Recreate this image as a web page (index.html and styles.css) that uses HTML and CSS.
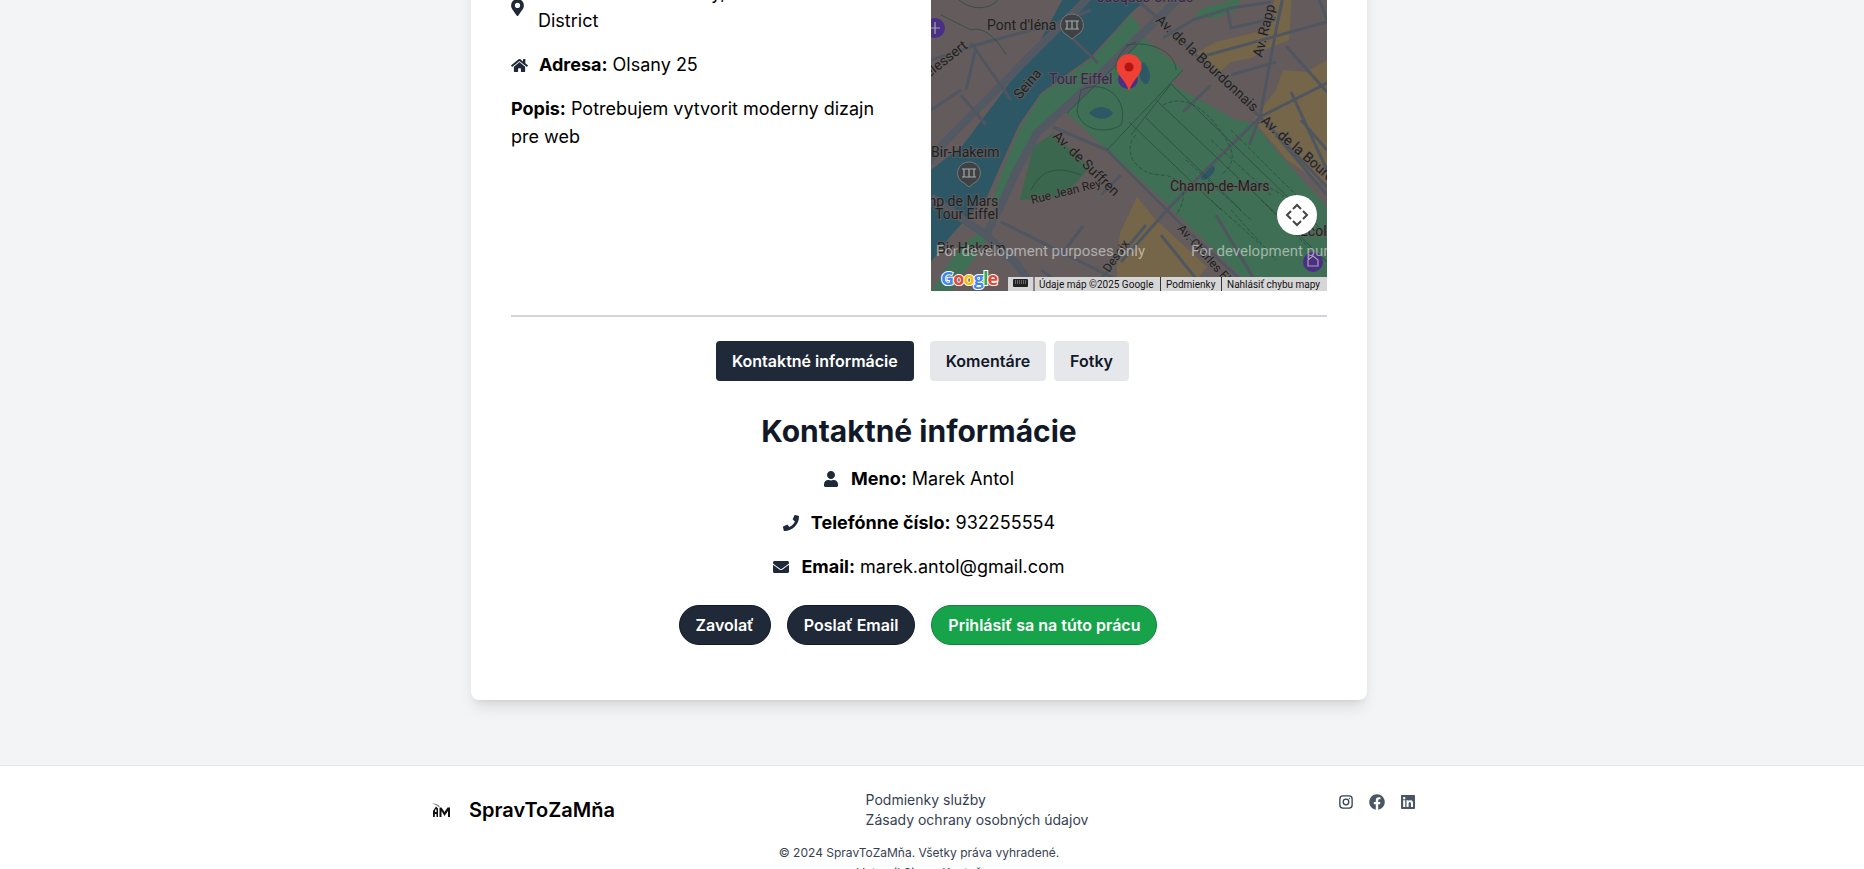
FILE: index.html
```html
<!DOCTYPE html>
<html lang="sk">
<head>
<meta charset="UTF-8">
<meta name="viewport" content="width=device-width, initial-scale=1.0">
<title>SpravToZaMňa</title>
<link rel="stylesheet" href="styles.css">
</head>
<body>
  <main class="page">
    <div class="card">
      <div class="top">
        <div class="info">
          <p class="row row-loc">
            <svg class="ico ico-pin" viewBox="0 0 384 512"><path d="M172.268 501.67C26.97 291.031 0 269.413 0 192 0 85.961 85.961 0 192 0s192 85.961 192 192c0 77.413-26.97 99.031-172.268 309.67-9.535 13.774-29.93 13.773-39.464 0zM192 272c44.183 0 80-35.817 80-80s-35.817-80-80-80-80 35.817-80 80 35.817 80 80 80z"/></svg>
            <span><b>Lokalita:</b> Trenčiansky, Bánovce nad Nitrou District</span>
          </p>
          <p class="row">
            <svg class="ico ico-home" viewBox="0 0 576 512"><path d="M280.37 148.26L96 300.11V464a16 16 0 0 0 16 16l112.06-.29a16 16 0 0 0 15.92-16V368a16 16 0 0 1 16-16h64a16 16 0 0 1 16 16v95.64a16 16 0 0 0 16 16.05L464 480a16 16 0 0 0 16-16V300L295.67 148.26a12.19 12.19 0 0 0-15.3 0zM571.6 251.47L488 182.56V44.05a12 12 0 0 0-12-12h-56a12 12 0 0 0-12 12v72.61L318.47 43a48 48 0 0 0-61 0L4.34 251.47a12 12 0 0 0-1.6 16.9l25.5 31A12 12 0 0 0 45.15 301l235.22-193.74a12.19 12.19 0 0 1 15.3 0L530.9 301a12 12 0 0 0 16.9-1.6l25.5-31a12 12 0 0 0-1.7-16.93z"/></svg>
            <span><b>Adresa:</b> Olsany 25</span>
          </p>
          <p class="desc"><b>Popis:</b> Potrebujem vytvorit moderny dizajn pre web</p>
        </div>

        <svg class="map" viewBox="0 -22 396 313">
          <rect class="land" x="0" y="-22" width="396" height="313"/>

          <!-- tan blocks -->
          <path class="tan" d="M262 55L285 42L335 30L342 5L350 -22L362 -22L358 40L338 48L320 58L300 62L285 75Z"/>
          <path class="tan" d="M322 120L345 90L352 70L375 72L396 60V187L356 160Z"/>
          <path class="tan" d="M189 233L206 197L222 217L276 267L256 291H186L186 257Z"/>

          <!-- water and green -->
          <path class="water" d="M143 -22H240L200 13L160 57L110 93L88 125L69 167L56 197L22 233L0 262V170L32 145L107 45Z"/>
          <path class="park" d="M206 33L252 70L240 84L305 120L322 123L356 163L396 207V277L350 291H325L229 197L176 150L136 113Z"/>
          <path class="park-dark" d="M122 133L159 167L132 197L89 200L102 147Z"/>
          <path class="park" d="M200 15L160 60L110 95L88 130L70 175L60 205L72 205L98 140L146 93L210 28Z"/>
          <path class="park" d="M256 24L272 8L310 -2L305 10L285 18L270 18Z"/>
          <path class="park" d="M0 291L30 245L50 232L56 240L20 291Z"/>
          <path class="water" d="M158 113C165 105 176 105 182 113C178 120 165 121 158 113Z"/>
          <path class="water" d="M212 62C218 66 222 78 216 84C208 84 206 70 212 62Z"/>
          <ellipse class="water" cx="277" cy="173" rx="9" ry="4" transform="rotate(-45 277 173)"/>
          <ellipse class="water" cx="50" cy="-8" rx="9" ry="3" transform="rotate(-30 50 -8)"/>

          <!-- wide roads -->
          <g class="road-wide">
            <path d="M-5 165L13 143L105 50L150 5L175 -22"/>
            <path d="M55 235L70 205L86 170L106 133L146 97L236 10L268 -22"/>
            <path d="M0 197L55 235L85 263L105 291"/>
          </g>
          <g class="road">
            <path d="M140 37L167 63"/>
            <path d="M200 -5L226 17L329 117L396 187"/>
            <path d="M176 150L258 232L322 291"/>
            <path d="M122 127L176 150"/>
            <path d="M356 -22L345 30L329 117L318 145"/>
            <path d="M396 83L329 117L270 175L236 210L190 262"/>
            <path d="M232 38L262 20L300 8L340 2"/>
            <path d="M296 8L300 28L345 18"/>
            <path d="M266 58L396 22"/>
            <path d="M300 75L345 62"/>
            <path d="M280 85L252 112"/>
            <path d="M380 -22L396 20"/>
            <path d="M355 46L396 92"/>
            <path d="M360 92L396 170"/>
            <path d="M70 222L150 262L190 282"/>
            <path d="M40 43L80 100"/>
            <path d="M0 60L45 45L130 22L160 10"/>
            <path d="M45 48L35 90"/>
            <path d="M0 110L30 90"/>
            <path d="M190 175L170 195"/>
            <path d="M152 226L130 255"/>
            <path d="M285 215L330 291"/>
            <path d="M370 120L396 150"/>
            <path d="M345 135L396 195"/>
            <path d="M215 225L160 291"/>
            <path d="M30 95L55 125"/>
            <path d="M110 270L140 291"/>
            <path d="M230 235L275 291"/>
          </g>

          <!-- park paths -->
          <g class="path">
            <path d="M136 113L206 45M176 150L252 70M200 135L240 84"/>
            <path d="M198 122L290 210M215 118L310 210M225 100L396 262M240 84L396 235"/>
            <path d="M150 90C175 78 198 100 190 125C175 135 148 130 146 110Z"/>
            <path d="M195 45C225 40 245 55 245 70M185 70C185 55 195 45 205 42"/>
            <path d="M20 -10C30 10 60 15 70 -5M10 15L40 30C55 25 70 45 75 55"/>
            <path d="M100 190C110 170 125 165 150 175"/>
          </g>
          <g class="path path-dash">
            <path d="M232 105C250 95 270 105 285 125C300 145 310 160 290 175"/>
            <path d="M205 135C190 150 205 175 230 175C250 175 260 195 245 215"/>
            <path d="M300 130L370 200M280 140L340 195M255 160L320 220"/>
            <path d="M300 210L345 260M330 200L380 250M280 200L330 245M250 230L300 280"/>
            <path d="M310 190C330 180 350 190 360 205"/>
          </g>

          <!-- labels -->
          <text class="lbl lbl-poi" x="166" y="2">Jacques Chirac</text>
          <text class="lbl" x="56" y="30">Pont d'Iéna</text>
          <text class="lbl lbl-poi" x="118" y="84">Tour Eiffel</text>
          <text class="lbl" x="0" y="157">Bir-Hakeim</text>
          <text class="lbl" x="-7" y="206">mp de Mars</text>
          <text class="lbl" x="4" y="219">Tour Eiffel</text>
          <text class="lbl" x="239" y="191">Champ-de-Mars</text>
          <text class="lbl" x="369" y="236">Ecole</text>
          <text class="lbl" x="6" y="253">Bir-Hakeim</text>
          <text class="lbl lbl-sm" transform="translate(101 204) rotate(-14)">Rue Jean Rey</text>
          <text class="lbl" transform="translate(-2 78) rotate(-38)">elessert</text>
          <text class="lbl" transform="translate(89 100) rotate(-50)">Seina</text>
          <text class="lbl" transform="translate(224 21) rotate(43)">Av. de la Bourdonnais</text>
          <text class="lbl" transform="translate(121 137) rotate(44)">Av. de Suffren</text>
          <text class="lbl" transform="translate(331 58) rotate(-76)">Av. Rapp</text>
          <text class="lbl" transform="translate(329 122) rotate(41)">Av. de la Bourdonnais</text>
          <text class="lbl lbl-sm" transform="translate(246 229) rotate(48)">Av. Charles Floquet</text>
          <text class="lbl lbl-sm" transform="translate(178 273) rotate(-55)">Desaix</text>

          <!-- markers -->
          <path class="poi" d="M141 14a11 11 0 0 1 5 21l-5 4-5-4a11 11 0 0 1 5-21z"/>
          <path class="poi" d="M38 162a11 11 0 0 1 5 21l-5 4-5-4a11 11 0 0 1 5-21z"/>
          <path class="poi-mark" d="M134 21h14M134 29h14M136 21v8M141 21v8M146 21v8M31 169h14M31 177h14M33 169v8M38 169v8M43 169v8"/>
          <circle class="poi-purple" cx="4" cy="28" r="10"/>
          <circle class="poi-purple" cx="382" cy="262" r="10"/>
          <circle class="poi-purple" cx="197" cy="79" r="10"/>
          <path class="poi-mark" d="M4 22v12M-1 28h10M377 266v-6l5-4 5 4v6z"/>

          <!-- red pin -->
          <path class="pin" d="M198 54c7 0 12.500 5.500 12.500 12.500c0 9-9 13-12.500 24.500c-3.500-11.500-12.500-15.500-12.500-24.500C185.500 59.500 191 54 198 54z"/>
          <circle class="pin-dot" cx="198" cy="67" r="4.500"/>

          <!-- watermark -->
          <text class="dev" x="5" y="256">For development purposes only</text>
          <text class="dev" x="260" y="256">For development purposes only</text>

          <!-- fullscreen control -->
          <circle class="fs" cx="366" cy="215" r="20"/>
          <path class="fs-arrow" d="M362 209l4-4 4 4M362 221l4 4 4-4M360 211l-4 4 4 4M372 211l4 4-4 4"/>

          <!-- google logo -->
          <text class="goog" x="10" y="285"><tspan fill="#4285f4">G</tspan><tspan fill="#ea4335">o</tspan><tspan fill="#fbbc05">o</tspan><tspan fill="#4285f4">g</tspan><tspan fill="#34a853">l</tspan><tspan fill="#ea4335">e</tspan></text>

          <!-- attribution -->
          <rect class="attr-bg" x="77" y="277" width="319" height="14"/>
          <rect class="attr-key" x="82" y="279" width="15" height="8" rx="1"/>
          <path class="attr-key-l" d="M84 281h11M84 283h11"/>
          <path class="attr-sep" d="M103 277v14M229.500 277v14M290.500 277v14"/>
          <text class="attr" x="108" y="287.500">Údaje máp ©2025 Google</text>
          <text class="attr" x="235" y="287.500">Podmienky</text>
          <text class="attr" x="296" y="287.500">Nahlásiť chybu mapy</text>
        </svg>
      </div>

      <hr class="sep">

      <div class="tabs">
        <button class="tab tab-active">Kontaktné informácie</button>
        <button class="tab">Komentáre</button>
        <button class="tab">Fotky</button>
      </div>

      <h2 class="title">Kontaktné informácie</h2>

      <p class="contact">
        <svg class="ico ico-user" viewBox="0 0 448 512"><path d="M224 256c70.7 0 128-57.3 128-128S294.700 0 224 0 96 57.300 96 128s57.300 128 128 128zm89.600 32h-16.700c-22.200 10.200-46.900 16-72.900 16s-50.600-5.800-72.900-16h-16.700C60.200 288 0 348.200 0 422.400V464c0 26.500 21.500 48 48 48h352c26.500 0 48-21.500 48-48v-41.600c0-74.200-60.200-134.400-134.400-134.400z"/></svg><b>Meno:</b> Marek Antol
      </p>
      <p class="contact">
        <svg class="ico ico-wide" viewBox="0 0 512 512"><path d="M493.400 24.600l-104-24c-11.300-2.600-22.900 3.300-27.500 13.900l-48 112c-4.200 9.800-1.400 21.300 6.900 28l60.600 49.600c-36 76.700-98.900 140.500-177.200 177.200l-49.600-60.600c-6.800-8.300-18.200-11.100-28-6.900l-112 48C3.900 366.500-2 378.100.6 389.400l24 104C27.100 504.200 36.700 512 48 512c256.100 0 464-207.500 464-464 0-11.200-7.700-20.900-18.600-23.400z"/></svg><b>Telefónne číslo:</b> 932255554
      </p>
      <p class="contact">
        <svg class="ico ico-wide" viewBox="0 0 512 512"><path d="M502.300 190.800c3.900-3.100 9.700-.2 9.700 4.700V400c0 26.500-21.500 48-48 48H48c-26.500 0-48-21.500-48-48V195.600c0-5 5.700-7.800 9.700-4.700 22.400 17.400 52.100 39.500 154.100 113.600 21.100 15.400 56.700 47.800 92.200 47.600 35.700.3 72-32.800 92.300-47.600 102-74.100 131.600-96.300 154-113.700zM256 320c23.200.4 56.600-29.200 73.400-41.400 132.700-96.300 142.800-104.700 173.400-128.700 5.800-4.500 9.200-11.500 9.200-18.900v-19c0-26.500-21.500-48-48-48H48C21.500 64 0 85.500 0 112v19c0 7.400 3.400 14.300 9.200 18.900 30.600 23.900 40.700 32.400 173.400 128.700 16.800 12.200 50.200 41.800 73.400 41.400z"/></svg><b>Email:</b> marek.antol@gmail.com
      </p>

      <div class="actions">
        <button class="btn">Zavolať</button>
        <button class="btn">Poslať Email</button>
        <button class="btn btn-green">Prihlásiť sa na túto prácu</button>
      </div>
    </div>
  </main>

  <footer class="footer">
    <div class="foot-top">
      <div class="brand">
        <svg class="logo" viewBox="0 0 18 15">
          <path d="M0 .5C3 0 6 1 8 3.500L6.500 4C5 2.500 3 1.200 0 .5z" fill="#888"/>
          <path d="M1 14V8L4 3.500L6 5.500V14H4.500V11H2.800V14zM2.800 9H4.500V6.500L3.600 6z" fill="#111"/>
          <path d="M7.500 14V4.500H9.500L12.500 9L15.500 4.500H18V14H16V8L12.500 13L9.500 8V14z" fill="#111"/>
        </svg>
        <span class="brand-name">SpravToZaMňa</span>
      </div>
      <div class="links">
        <a>Podmienky služby</a>
        <a>Zásady ochrany osobných údajov</a>
      </div>
      <div class="social">
        <svg class="soc soc-ig" viewBox="0 0 16 16"><rect class="ig" x="1" y="1" width="14" height="14" rx="3.500"/><circle class="ig" cx="8" cy="8" r="3.200"/><circle cx="12" cy="4" r=".8"/></svg>
        <svg class="soc soc-fb" viewBox="0 0 512 512"><path d="M504 256C504 119 393 8 256 8S8 119 8 256c0 123.780 90.690 226.380 209.250 245V327.690h-63V256h63v-54.640c0-62.150 37-96.480 93.670-96.480 27.140 0 55.520 4.840 55.520 4.840v61h-31.280c-30.800 0-40.410 19.120-40.410 38.730V256h68.780l-11 71.690h-57.780V501C413.310 482.380 504 379.780 504 256z"/></svg>
        <svg class="soc soc-in" viewBox="0 0 448 512"><path d="M416 32H31.900C14.300 32 0 46.500 0 64.300v383.400C0 465.500 14.300 480 31.900 480H416c17.600 0 32-14.500 32-32.300V64.300c0-17.800-14.400-32.300-32-32.300zM135.400 416H69V202.200h66.500V416zm-33.200-243c-21.300 0-38.500-17.300-38.500-38.500S80.900 96 102.200 96c21.200 0 38.500 17.300 38.500 38.500 0 21.300-17.200 38.500-38.500 38.500zm282.100 243h-66.400V312c0-24.800-.5-56.700-34.500-56.700-34.600 0-39.900 27-39.900 54.900V416h-66.400V202.200h63.700v29.200h.9c8.900-16.800 30.600-34.500 62.900-34.500 67.200 0 79.700 44.300 79.700 101.900V416z"/></svg>
      </div>
    </div>
    <div class="copy">
      <p>© 2024 SpravToZaMňa. Všetky práva vyhradené.</p>
      <p>Vytvoril Simon Kontoš</p>
    </div>
  </footer>
</body>
</html>
```
FILE: styles.css
```css
html, body {
  height: 100%;
  overflow: hidden;
}

body {
  margin: 0;
  background: #f3f4f6;
  color: #000;
  font-family: Inter, "Liberation Sans", sans-serif;
}

p {
  margin: 0;
}

b {
  font-weight: 700;
}

.page {
  padding: 0 26px 65px 0;
}

.card {
  width: 896px;
  box-sizing: border-box;
  margin: -62px auto 0;
  padding: 40px 40px 55px;
  background: #fff;
  border-radius: 8px;
  box-shadow: 0 10px 15px -3px rgba(0, 0, 0, 0.1), 0 4px 6px -4px rgba(0, 0, 0, 0.1);
}

.top {
  display: grid;
  grid-template-columns: 396px 396px;
  gap: 24px;
}

.info {
  padding: 1px 6px 0 0;
  font-size: 18px;
  line-height: 28px;
}

.row {
  display: flex;
  align-items: center;
  margin-bottom: 16px;
}

.ico {
  fill: #1f2937;
  flex: none;
}

.ico-pin {
  width: 13px;
  height: 17px;
  margin: 0 14px 0 0;
}

.ico-home {
  width: 17px;
  height: 15px;
  margin: 0 11px 0 0;
}

.ico-user {
  width: 14px;
  height: 16px;
  margin-right: 13px;
  vertical-align: -2px;
}

.ico-wide {
  width: 16px;
  height: 16px;
  margin-right: 12px;
  vertical-align: -2px;
}

/* map */
.map {
  display: block;
  width: 396px;
  height: 313px;
  font-family: Roboto, sans-serif;
}

.land { fill: #645c5c; }
.tan { fill: #75664a; }
.water { fill: #2e5765; }
.park { fill: #3f6f54; }
.park-dark { fill: #3a674e; }

.road-wide path {
  fill: none;
  stroke: #525962;
  stroke-width: 8;
}

.road path {
  fill: none;
  stroke: #4f5660;
  stroke-width: 3;
}

.path path {
  fill: none;
  stroke: #2b4b40;
  stroke-width: 0.8;
}

.path-dash path {
  stroke-dasharray: 4 2;
}

.lbl {
  fill: #1f1f1f;
  font-size: 14px;
  paint-order: stroke;
  stroke: rgba(103, 95, 95, 0.7);
  stroke-width: 2px;
}

.lbl-sm { font-size: 12px; }
.lbl-poi { fill: #35264f; }

.poi { fill: #3f4245; stroke: #77797b; stroke-width: 1; }
.poi-mark { fill: none; stroke: #a5a5a5; stroke-width: 1.200; }
.poi-purple { fill: #4b2f86; }
.pin { fill: #ee4035; }
.pin-dot { fill: #b3150f; }

.dev {
  fill: rgba(255, 255, 255, 0.5);
  font-size: 15px;
}

.fs { fill: #fff; }

.fs-arrow {
  fill: none;
  stroke: #444;
  stroke-width: 2;
}

.goog {
  font-family: "Open Sans", sans-serif;
  font-size: 18px;
  font-weight: 700;
  letter-spacing: -0.9px;
  paint-order: stroke;
  stroke: #fff;
  stroke-width: 2px;
}

.attr-bg { fill: #d6d6d6; }
.attr-key { fill: #222; }
.attr-key-l { stroke: #d6d6d6; stroke-width: 0.8; stroke-dasharray: 1 1; }
.attr-sep { stroke: #333; stroke-width: 1; }
.attr { fill: #111; font-size: 10px; }

.sep {
  height: 2px;
  margin: 24px 0;
  border: 0;
  background: #d1d5db;
}

/* tabs */
.tabs {
  display: flex;
  justify-content: center;
  gap: 8px;
  padding-left: 7px;
}

.tab, .btn {
  height: 40px;
  padding: 0 16px;
  font-family: inherit;
  font-size: 16px;
  font-weight: 600;
}

.tab {
  border: 0;
  background: #e5e7eb;
  color: #111827;
  border-radius: 4px;
}

.tab-active {
  margin-right: 8px;
  background: #1f2937;
  color: #fff;
}

.title {
  margin: 32px 0 16px;
  color: #111827;
  font-size: 30px;
  font-weight: 700;
  line-height: 36px;
  text-align: center;
}

.contact {
  margin-bottom: 16px;
  font-size: 18px;
  line-height: 28px;
  text-align: center;
}

.actions {
  display: flex;
  justify-content: center;
  gap: 16px;
  margin-top: 24px;
  padding-right: 2px;
}

.btn {
  border: 1px solid #111827;
  background: #1f2937;
  color: #fff;
  border-radius: 20px;
}

.btn-green {
  border-color: #15803d;
  background: #16a34a;
}

/* footer */
.footer {
  background: #fff;
  border-top: 1px solid #e5e7eb;
  padding: 24px 26px 0 0;
  color: #374151;
  font-size: 14px;
  line-height: 20px;
}

.foot-top {
  display: flex;
  justify-content: space-between;
  width: 983px;
  margin-left: 432px;
}

.brand {
  display: flex;
  align-items: center;
  gap: 19px;
  height: 40px;
}

.logo {
  width: 18px;
  height: 15px;
}

.brand-name {
  color: #000;
  font-size: 20px;
  font-weight: 600;
}

.links {
  display: flex;
  flex-direction: column;
}

.social {
  display: flex;
  align-items: center;
  gap: 16px;
  height: 24px;
}

.soc {
  fill: #4b5563;
}

.soc-ig, .soc-in {
  width: 14px;
  height: 16px;
}

.soc-fb {
  width: 16px;
  height: 16px;
}

.ig {
  fill: none;
  stroke: #374151;
  stroke-width: 1.500;
}

.copy {
  margin-top: 13px;
  font-size: 12px;
  line-height: 20px;
  text-align: center;
}
```
